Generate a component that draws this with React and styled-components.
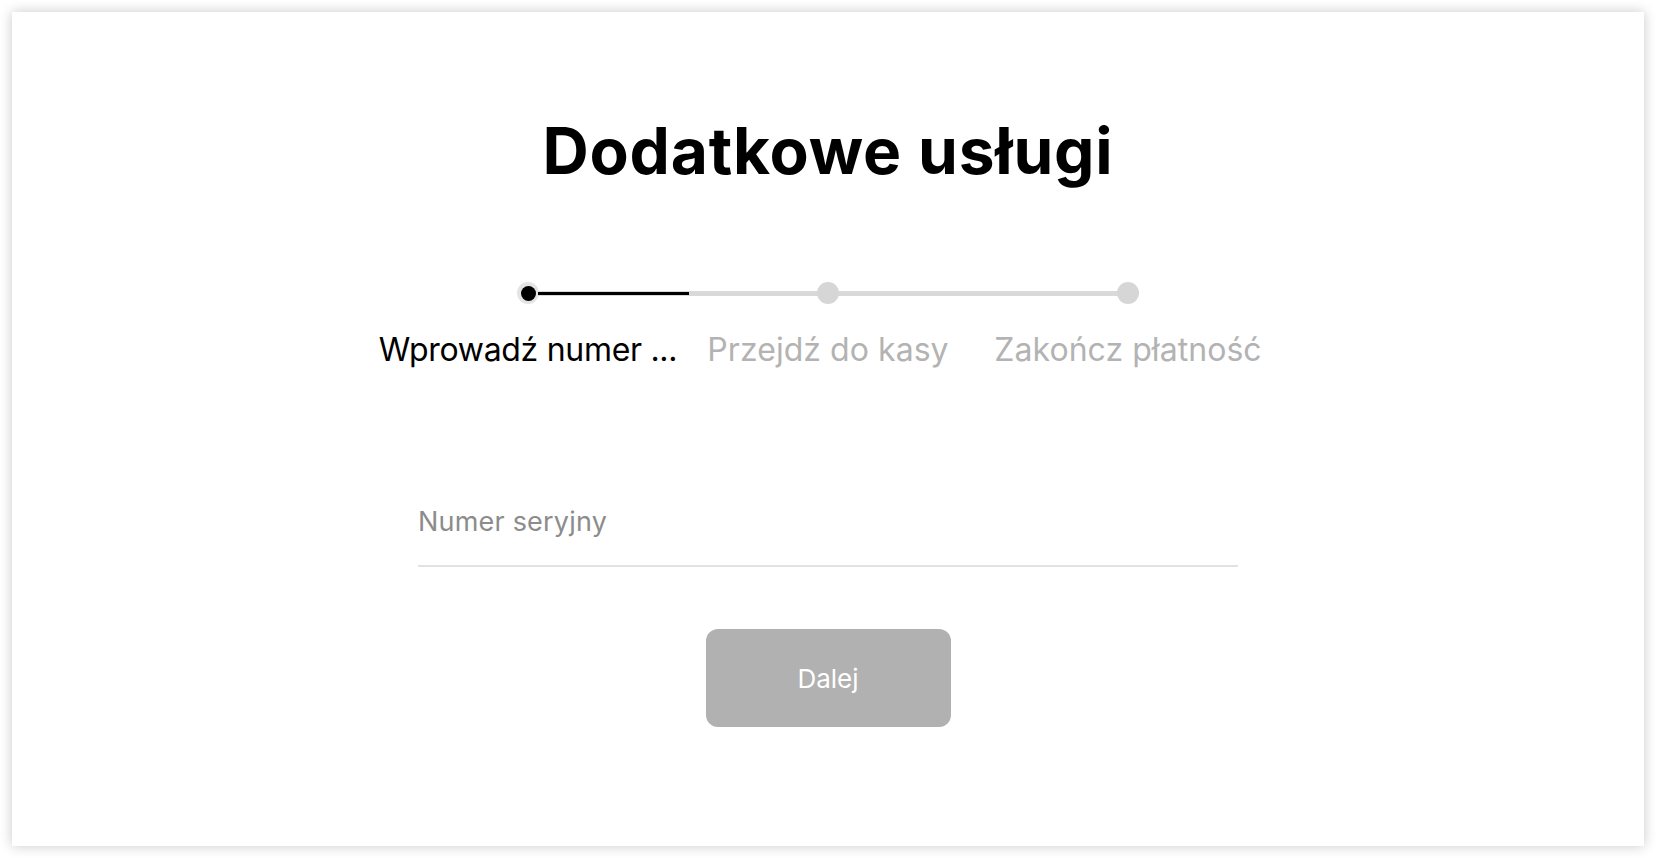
import { Fragment } from 'react';
import styled, { createGlobalStyle } from 'styled-components';

const GlobalStyle = createGlobalStyle`
   * {
      box-sizing: border-box;
   }
   body {
      background-color: #ffffff;
      font-family: Inter, 'Liberation Sans', sans-serif;
      margin: 0;
      padding: 12px;
   }
`;
const Card = styled.div`
   align-items: center;
   background-color: #ffffff;
   box-shadow: 0 0 12px rgba(0, 0, 0, 0.22);
   display: flex;
   flex-direction: column;
   height: calc(100vh - 24px);
   padding-top: 107px;
   width: 100%;
   & h1 {
      color: #000000;
      font-size: 64px;
      font-weight: 700;
      letter-spacing: 0.8px;
      line-height: 64px;
      margin: 0;
   }
`;
const Stepper = styled.div`
   margin-top: 99px;
   width: 900px;
`;
const Track = styled.div`
   align-items: center;
   display: flex;
   height: 22px;
   margin: 0 139px;
`;
const Dot = styled.span`
   align-items: center;
   background-color: ${({ $active }) => ($active ? '#e4e4e4' : '#d6d6d6')};
   border-radius: 50%;
   display: flex;
   flex-shrink: 0;
   height: 22px;
   justify-content: center;
   width: 22px;
   & i {
      background-color: ${({ $active }) => ($active ? '#000000' : 'transparent')};
      border-radius: 50%;
      height: 15px;
      width: 15px;
   }
`;
const Segment = styled.span`
   align-items: center;
   background-color: #d9d9d9;
   display: flex;
   flex: 1;
   height: 5px;
   margin: 0 -1px;
   & b {
      background-color: #000000;
      height: 3px;
   }
`;
const Labels = styled.div`
   display: grid;
   grid-template-columns: repeat(3, 1fr);
   margin-top: 30px;
`;
const Label = styled.div`
   color: ${({ $active }) => ($active ? '#000000' : '#b3b3b3')};
   font-size: 32px;
   font-weight: 400;
   letter-spacing: ${({ $active }) => ($active ? '-0.3px' : '0.05px')};
   line-height: 32px;
   text-align: center;
   white-space: nowrap;
`;
const Input = styled.input`
   background: transparent;
   border: none;
   border-bottom: 2px solid #e2e2e2;
   color: #000000;
   font-family: Inter, 'Liberation Sans', sans-serif;
   font-size: 27px;
   height: 59px;
   letter-spacing: 0.2px;
   line-height: 27px;
   margin-top: 142px;
   outline: none;
   padding: 0 0 30px 0;
   width: 820px;
   &::placeholder {
      color: #8c8c8c;
   }
`;
const Button = styled.button`
   background-color: #b1b1b1;
   border: none;
   border-radius: 12px;
   color: #ffffff;
   cursor: default;
   font-family: Inter, 'Liberation Sans', sans-serif;
   font-size: 26px;
   font-weight: 400;
   height: 98px;
   margin-top: 62px;
   width: 245px;
`;
const steps = ['Wprowadź numer ...', 'Przejdź do kasy', 'Zakończ płatność'];
const App = () => {
   return (
      <Fragment>
         <GlobalStyle />
         <Card>
            <h1>Dodatkowe usługi</h1>
            <Stepper>
               <Track>
                  <Dot $active>
                     <i />
                  </Dot>
                  <Segment>
                     <b style={{ width: '54%' }} />
                  </Segment>
                  <Dot />
                  <Segment />
                  <Dot />
               </Track>
               <Labels>
                  {steps.map((step, index) => (
                     <Label key={step} $active={index === 0}>
                        {step}
                     </Label>
                  ))}
               </Labels>
            </Stepper>
            <Input placeholder='Numer seryjny' />
            <Button disabled>Dalej</Button>
         </Card>
      </Fragment>
   );
};
export default App;
